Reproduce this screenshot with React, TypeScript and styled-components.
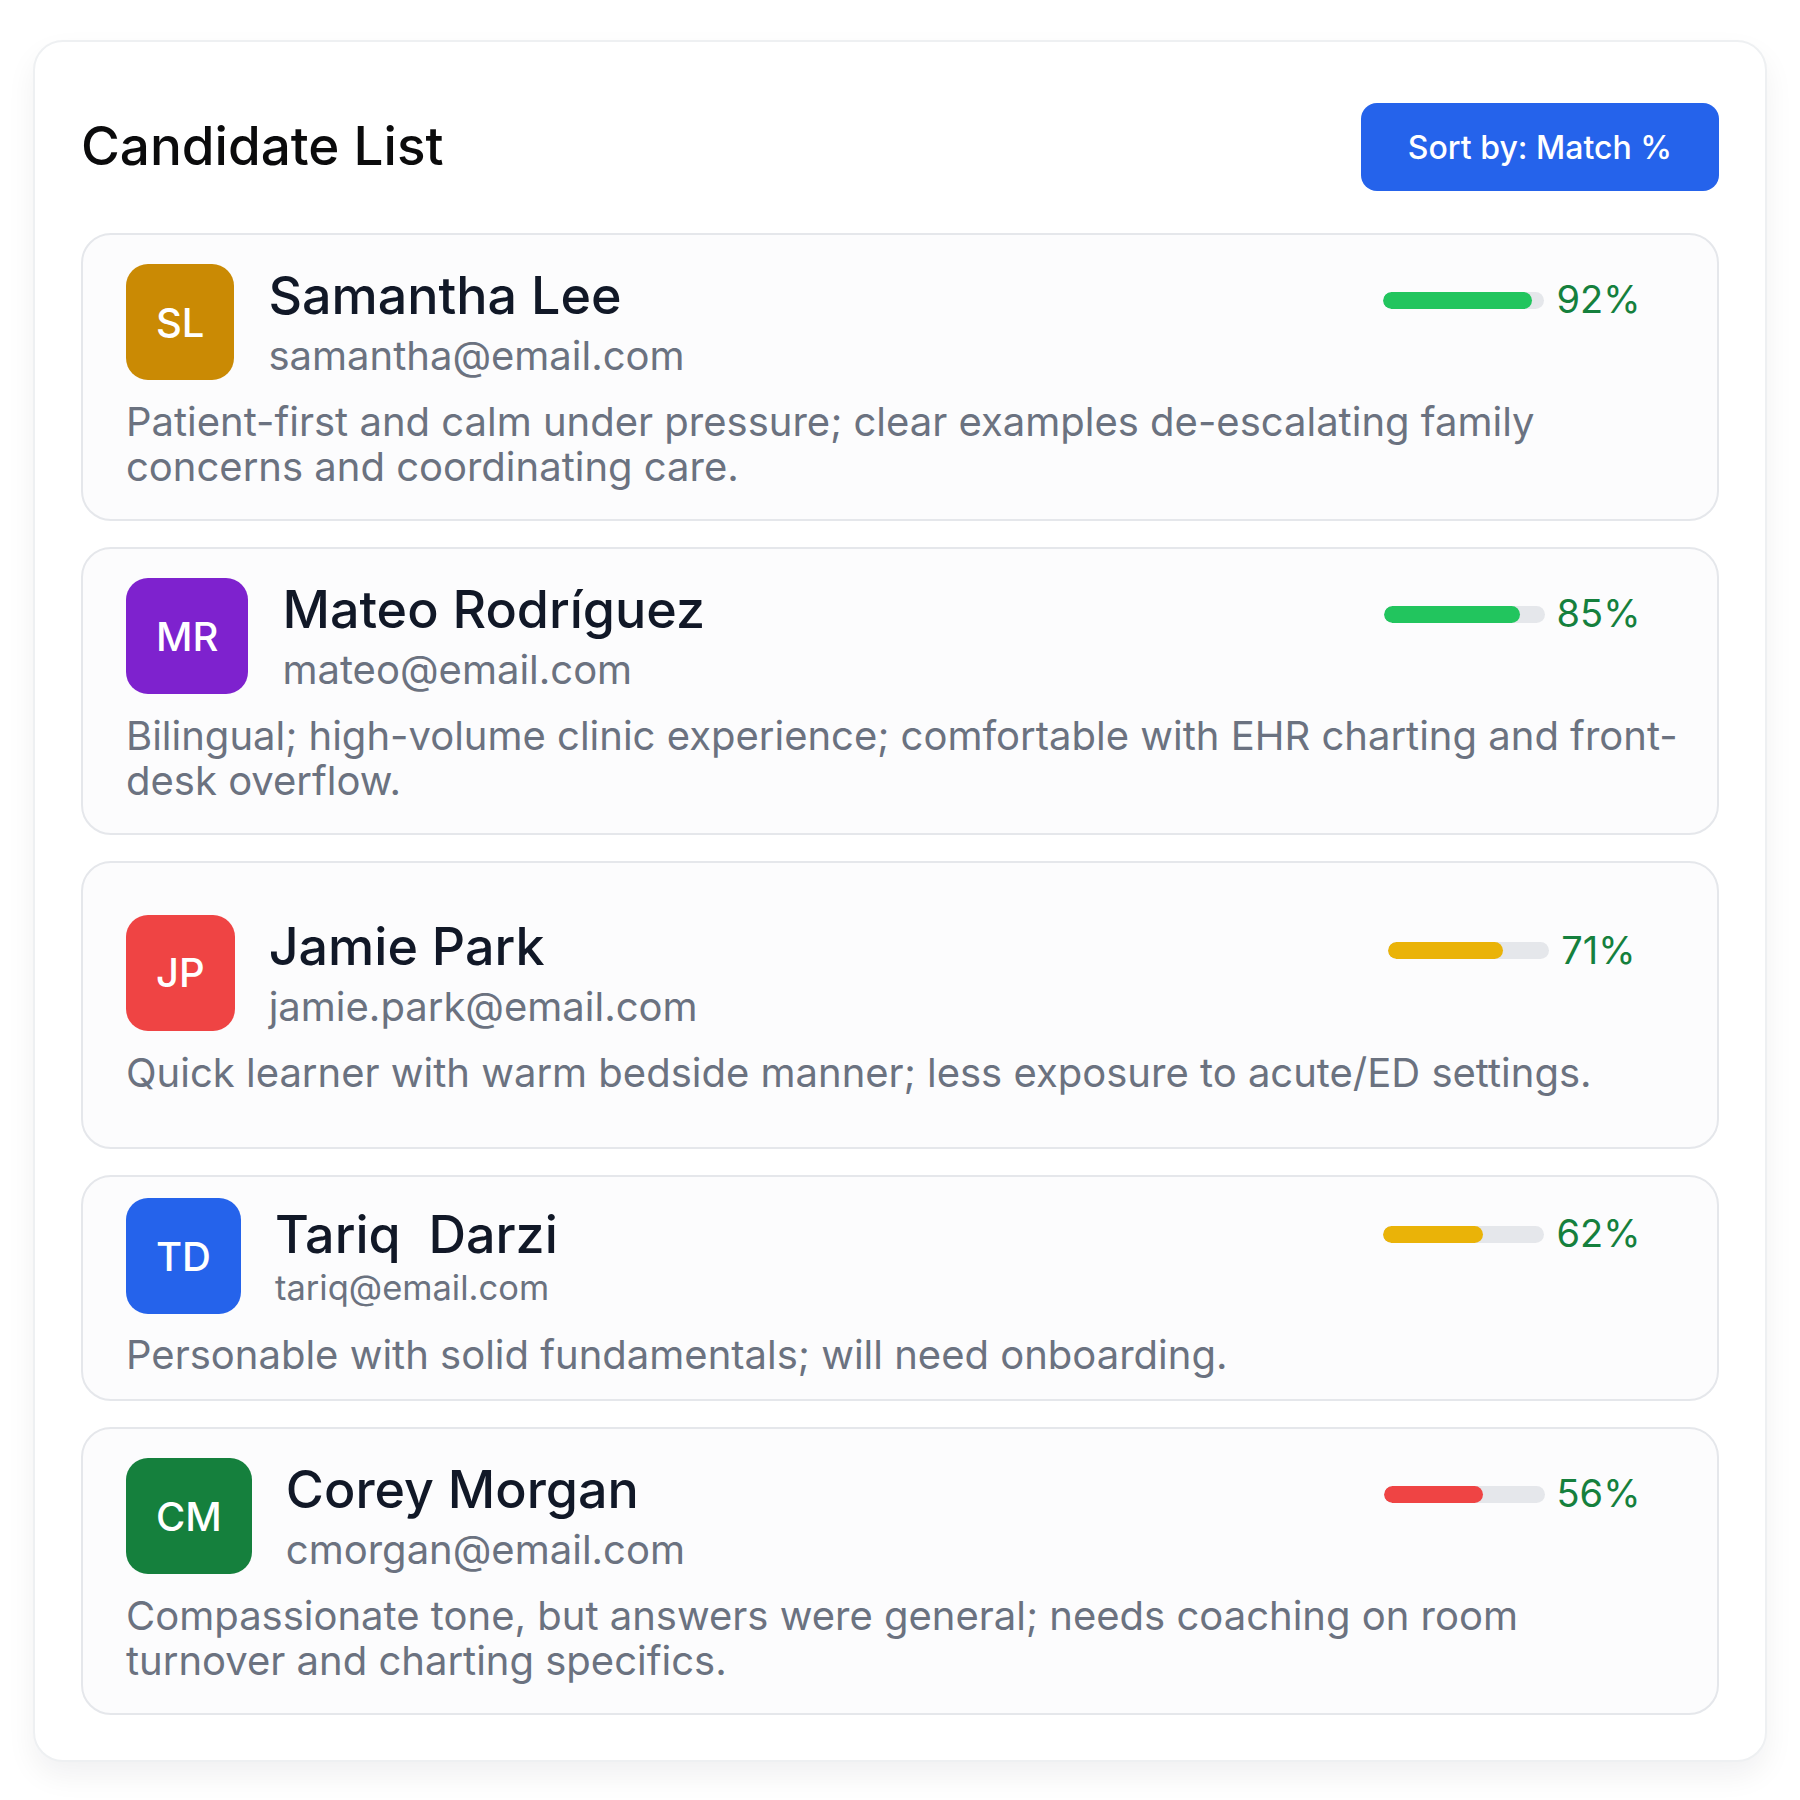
import * as React from "react";
import styled, { createGlobalStyle } from "styled-components";

const GlobalStyle = createGlobalStyle`
    * {
        box-sizing: border-box;
    }
    body {
        margin: 0;
        background: #ffffff;
        font-family: Inter, "Noto Sans", "Liberation Sans", sans-serif;
    }
`;

const Page = styled.div`
    padding: 40px 33px 43px 33px;
`;
const Panel = styled.div`
    background: #ffffff;
    border: 2px solid #eef0f2;
    border-radius: 30px;
    box-shadow: 0 14px 30px rgba(17, 24, 39, 0.06);
    padding: 61px 46px 45px;
`;
const Header = styled.div`
    display: flex;
    justify-content: space-between;
    align-items: center;
    margin-bottom: 42px;
`;
const Title = styled.h1`
    margin: 0;
    font-size: 53px;
    font-weight: 500;
    line-height: 1.2;
    color: #0b0b0c;
`;
const SortButton = styled.button`
    height: 88px;
    padding: 0 47px;
    border: none;
    border-radius: 16px;
    background: #2563eb;
    color: #ffffff;
    font-family: inherit;
    font-size: 32px;
    font-weight: 500;
`;
const List = styled.div`
    display: flex;
    flex-direction: column;
    gap: 26px;
`;
const Card = styled.div<{ $pad: number; $minHeight?: number }>`
    display: flex;
    flex-direction: column;
    justify-content: center;
    min-height: ${p => (p.$minHeight ? `${p.$minHeight}px` : "auto")};
    padding: ${p => p.$pad}px 34px ${p => p.$pad + 1}px 43px;
    background: #fcfcfd;
    border: 2px solid #e5e7eb;
    border-radius: 30px;
`;
const Top = styled.div`
    display: flex;
    align-items: center;
`;
const Avatar = styled.div<{ $color: string }>`
    flex-shrink: 0;
    display: flex;
    align-items: center;
    justify-content: center;
    height: 116px;
    padding: 0 30px;
    border-radius: 22px;
    background: ${p => p.$color};
    color: #ffffff;
    font-size: 40px;
    font-weight: 500;
`;
const Info = styled.div`
    flex: 1;
    display: flex;
    flex-direction: column;
    margin-left: 34px;
`;
const Name = styled.div`
    font-size: 52px;
    font-weight: 500;
    line-height: 64px;
    color: #111827;
    white-space: pre;
`;
const Email = styled.div<{ $size: number; $gap: number }>`
    margin-top: ${p => p.$gap}px;
    font-size: ${p => p.$size}px;
    line-height: 1.2;
    color: #6b7280;
`;
const Score = styled.div`
    align-self: flex-start;
    display: flex;
    align-items: center;
    justify-content: center;
    gap: 12px;
    width: 300px;
    height: 48px;
    margin-top: 12px;
    margin-right: 21px;
`;
const Track = styled.div`
    width: 161px;
    height: 17px;
    border-radius: 999px;
    background: #e5e7eb;
    overflow: hidden;
`;
const Fill = styled.div<{ $color: string }>`
    height: 100%;
    border-radius: 999px;
    background: ${p => p.$color};
`;
const Percent = styled.span`
    font-size: 38px;
    line-height: 1.2;
    color: #15803d;
`;
const Note = styled.p<{ $gap: number }>`
    margin: ${p => p.$gap}px 0 0;
    font-size: 40px;
    line-height: 45px;
    color: #6b7280;
`;

interface Candidate {
    initials: string;
    color: string;
    name: string;
    email: string;
    match: number;
    bar: number;
    barColor: string;
    note: string;
    pad?: number;
    minHeight?: number;
    emailSize?: number;
    emailGap?: number;
    noteGap?: number;
}

const candidates: Candidate[] = [
    {
        initials: "SL",
        color: "#ca8a04",
        name: "Samantha Lee",
        email: "samantha@email.com",
        match: 92,
        bar: 92,
        barColor: "#22c55e",
        note: "Patient-first and calm under pressure; clear examples de-escalating family concerns and coordinating care.",
    },
    {
        initials: "MR",
        color: "#7e22ce",
        name: "Mateo Rodríguez",
        email: "mateo@email.com",
        match: 85,
        bar: 85,
        barColor: "#22c55e",
        note: "Bilingual; high-volume clinic experience; comfortable with EHR charting and front-desk overflow.",
    },
    {
        initials: "JP",
        color: "#ef4444",
        name: "Jamie Park",
        email: "jamie.park@email.com",
        match: 71,
        bar: 71,
        barColor: "#eab308",
        note: "Quick learner with warm bedside manner; less exposure to acute/ED settings.",
        minHeight: 288,
    },
    {
        initials: "TD",
        color: "#2563eb",
        name: "Tariq  Darzi",
        email: "tariq@email.com",
        match: 62,
        bar: 62,
        barColor: "#eab308",
        note: "Personable with solid fundamentals; will need onboarding.",
        pad: 21,
        emailSize: 34.5,
        emailGap: 0,
        noteGap: 18,
    },
    {
        initials: "CM",
        color: "#15803d",
        name: "Corey Morgan",
        email: "cmorgan@email.com",
        match: 56,
        bar: 62,
        barColor: "#ef4444",
        note: "Compassionate tone, but answers were general; needs coaching on room turnover and charting specifics.",
    },
];

const CandidateCard = ({ c }: { c: Candidate }) => (
    <Card $pad={c.pad ?? 29} $minHeight={c.minHeight}>
        <Top>
            <Avatar $color={c.color}>{c.initials}</Avatar>
            <Info>
                <Name>{c.name}</Name>
                <Email $size={c.emailSize ?? 40} $gap={c.emailGap ?? 4}>
                    {c.email}
                </Email>
            </Info>
            <Score>
                <Track>
                    <Fill $color={c.barColor} style={{ width: `${c.bar}%` }} />
                </Track>
                <Percent>{c.match}%</Percent>
            </Score>
        </Top>
        <Note $gap={c.noteGap ?? 19}>{c.note}</Note>
    </Card>
);

const App = () => {
    return (
        <Page>
            <GlobalStyle />
            <Panel>
                <Header>
                    <Title>Candidate List</Title>
                    <SortButton>Sort by: Match %</SortButton>
                </Header>
                <List>
                    {candidates.map(c => (
                        <CandidateCard key={c.initials} c={c} />
                    ))}
                </List>
            </Panel>
        </Page>
    );
};
export default App;
